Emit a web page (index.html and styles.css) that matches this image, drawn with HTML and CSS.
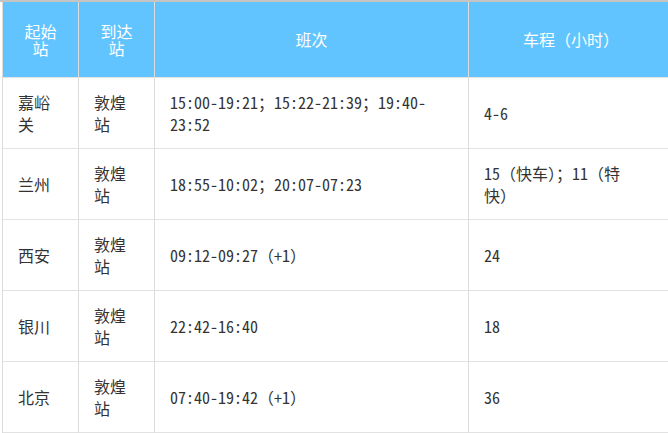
FILE: index.html
```html
<!DOCTYPE html>
<html lang="zh-CN">
<head>
<meta charset="utf-8">
<title>敦煌站班次</title>
<link rel="stylesheet" href="styles.css">
</head>
<body>
<div class="wrap">
<table class="schedule">
  <colgroup>
    <col class="c-from">
    <col class="c-to">
    <col class="c-times">
    <col class="c-hours">
  </colgroup>
  <thead>
    <tr>
      <th>起始站</th>
      <th>到达站</th>
      <th>班次</th>
      <th class="hours">车程（小时）</th>
    </tr>
  </thead>
  <tbody>
    <tr>
      <td>嘉峪关</td>
      <td>敦煌站</td>
      <td>15:00-19:21；15:22-21:39；19:40-23:52</td>
      <td class="hours">4-6</td>
    </tr>
    <tr>
      <td>兰州</td>
      <td>敦煌站</td>
      <td>18:55-10:02；20:07-07:23</td>
      <td class="hours">15（快车）；11（特快）</td>
    </tr>
    <tr>
      <td>西安</td>
      <td>敦煌站</td>
      <td>09:12-09:27（+1）</td>
      <td class="hours">24</td>
    </tr>
    <tr>
      <td>银川</td>
      <td>敦煌站</td>
      <td>22:42-16:40</td>
      <td class="hours">18</td>
    </tr>
    <tr>
      <td>北京</td>
      <td>敦煌站</td>
      <td>07:40-19:42（+1）</td>
      <td class="hours">36</td>
    </tr>
  </tbody>
</table>
</div>
</body>
</html>
```

FILE: styles.css
```css
html, body {
  margin: 0;
  padding: 0;
  background: #ffffff;
  overflow: hidden;
}

.wrap {
  border-top: 2px solid #c4c4c4;
  padding-left: 2px;
}

.schedule {
  width: 672px;
  table-layout: fixed;
  border-collapse: separate;
  border-spacing: 0;
  border-left: 1px solid #dcdcdc;
  font-family: "Noto Sans Mono CJK SC", "Noto Sans CJK SC", "Liberation Mono", monospace;
  font-size: 16px;
  color: #333333;
}

.c-from { width: 76px; }
.c-to { width: 76px; }
.c-times { width: 314px; }
.c-hours { width: auto; }

.schedule th,
.schedule td {
  box-sizing: border-box;
  border-right: 1px solid #dcdcdc;
  border-bottom: 1px solid #e2e2e2;
  padding: 0 15px;
  vertical-align: middle;
}

.schedule th {
  height: 76px;
  background: #62c4ff;
  color: #ffffff;
  font-weight: normal;
  text-align: center;
  line-height: 17px;
}

.schedule td {
  height: 71px;
  text-align: left;
  line-height: 22px;
}

.schedule td.hours {
  padding-right: 45px;
}
```
